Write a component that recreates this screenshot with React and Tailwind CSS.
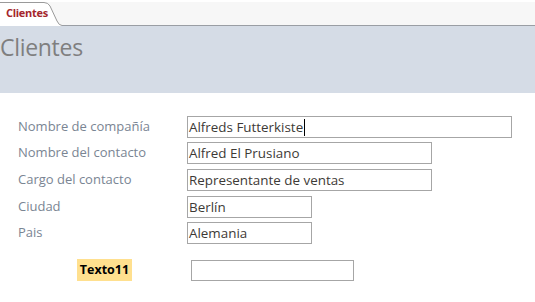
export default function App() {
  const font = { fontFamily: '"Open Sans", "Noto Sans", sans-serif' };
  const rows = [
    { label: "Nombre de compañía", value: "Alfreds Futterkiste", w: "w-[325px]", mt: "mt-[23px]", cursor: true },
    { label: "Nombre del contacto", value: "Alfred El Prusiano", w: "w-[245px]", mt: "mt-[4px]" },
    { label: "Cargo del contacto", value: "Representante de ventas", w: "w-[245px]", mt: "mt-[5px]" },
    { label: "Ciudad", value: "Berlín", w: "w-[125px]", mt: "mt-[5px]" },
    { label: "Pais", value: "Alemania", w: "w-[125px]", mt: "mt-[4px]" },
  ];
  return (
    <div className="w-[535px] h-[302px] bg-white overflow-hidden" style={font}>
      <div className="flex h-[26px] pt-[2px] bg-white">
        <div className="relative w-[62px] h-[24px] bg-[#f7f7f7]">
          <svg className="absolute inset-0" width="62" height="24" viewBox="0 0 62 24">
            <path d="M0 0.5 H44 Q48 0.5 50 4 L57 19 Q59 23.5 62 23.5 V24 H0 Z" fill="#ffffff" />
            <path d="M0 0.5 H44 Q48 0.5 50 4 L57 19 Q59 23.5 62 23.5" fill="none" stroke="#9a9a9a" strokeWidth="1" />
          </svg>
          <span className="absolute left-[6px] top-[4px] text-[11px] font-bold leading-[14px] text-[#a4262c] tracking-[-0.3px]">Clientes</span>
        </div>
        <div className="flex-1 bg-[#f7f7f7] border-b border-[#9a9ea4]"></div>
      </div>
      <div className="h-[67px] bg-[#d5dce6] pt-[6px]">
        <div className="text-[23px] leading-[30px] text-[#7f7f7f] tracking-[-0.3px]">Clientes</div>
      </div>
      {rows.map((r) => (
        <div key={r.label} className={`flex items-center ${r.mt}`}>
          <div className="w-[187px] pl-[18px] text-[13px] text-[#7a8593] leading-[22px] -mt-[3px]">{r.label}</div>
          <div className={`${r.w} h-[22px] border border-[#a6a6a6] flex items-center pl-[1px] text-[13.4px] text-[#3d3a36] leading-[20px]`}>
            <span>{r.value}</span>
            {r.cursor && <span className="w-[1px] h-[17px] bg-black ml-[1px]"></span>}
          </div>
        </div>
      ))}
      <div className="flex items-center mt-[15px]">
        <div className="ml-[77px] w-[55px] h-[22px] bg-[#ffe08f] flex items-center justify-center text-[12.5px] font-bold text-black leading-[22px]">Texto11</div>
        <div className="ml-[59px] w-[163px] h-[21px] border border-[#a6a6a6]"></div>
      </div>
    </div>
  );
}
